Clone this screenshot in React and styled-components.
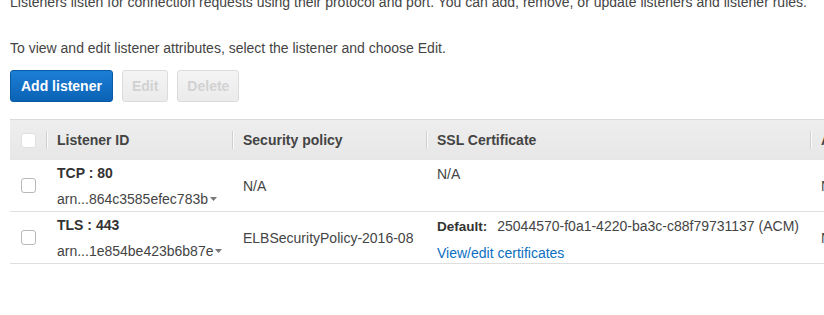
import React from 'react';
import styled, { createGlobalStyle } from 'styled-components';

const GlobalStyle = createGlobalStyle`
  html, body {
    margin: 0;
    padding: 0;
    background: #fff;
    overflow: hidden;
  }
  body {
    font-family: "Liberation Sans", Arial, Helvetica, sans-serif;
    font-size: 14px;
    color: #444;
  }
`;

const Page = styled.div`
  padding: 0 0 0 10px;
  width: 1100px;
`;

const Intro = styled.p`
  margin: ${props => (props.first ? '-8px 0 0' : '26px 0 0')};
  line-height: 20px;
  white-space: nowrap;
`;

const Toolbar = styled.div`
  display: flex;
  gap: 9px;
  margin-top: 12px;
`;

const Button = styled.button`
  height: 32px;
  padding: 0 ${props => (props.primary ? '10px' : '9px')};
  border-radius: 3px;
  font-family: inherit;
  font-size: 14px;
  font-weight: bold;
  cursor: ${props => (props.disabled ? 'default' : 'pointer')};
  color: ${props => (props.primary ? '#fff' : '#d2d2d2')};
  border: 1px solid ${props => (props.primary ? '#0a5aa3' : '#dcdcdc')};
  background: ${props =>
    props.primary
      ? 'linear-gradient(#1c7fd6, #0a62b4)'
      : 'linear-gradient(#f4f4f4, #ebebeb)'};
`;

const Table = styled.div`
  margin-top: 17px;
  display: grid;
  grid-template-columns: 36px 186px 194px 384px 280px;
`;

const HeadCell = styled.div`
  height: 40px;
  border-top: 1px solid #dadada;
  background: linear-gradient(#eeeeee, #e7e7e7);
  display: flex;
  align-items: center;
  position: relative;
  padding-left: 11px;
  font-weight: bold;
  color: #444;
  ${props =>
    props.divider &&
    `
    &::before {
      content: '';
      position: absolute;
      left: 0;
      top: 11px;
      bottom: 11px;
      width: 1px;
      background: #d0d0d0;
      box-shadow: 1px 0 0 #fafafa;
    }
  `}
`;

const Cell = styled.div`
  height: 52px;
  box-sizing: border-box;
  border-bottom: 1px solid #dfdfdf;
  padding: ${props => (props.top ? '1px 0 0 11px' : '0 0 0 11px')};
  display: flex;
  flex-direction: column;
  justify-content: ${props => (props.top ? 'flex-start' : 'center')};
  line-height: 26px;
  white-space: nowrap;
`;

const Check = styled.span`
  display: block;
  width: 13px;
  height: 13px;
  border-radius: 3px;
  background: #fff;
  border: 1px solid ${props => (props.head ? '#e0e0e0' : '#b8b8b8')};
`;

const Protocol = styled.span`
  font-weight: bold;
  color: #333;
`;

const Arn = styled.span`
  display: inline-flex;
  align-items: center;
  gap: 2px;
`;

const Label = styled.span`
  font-weight: bold;
  font-size: 13.5px;
  color: #333;
  margin-right: 10px;
`;

const Link = styled.a`
  color: #0b6fc0;
  text-decoration: none;
`;

const Caret = () => (
  <svg width="7" height="4" viewBox="0 0 7 4">
    <path d="M0 0 L7 0 L3.5 4 Z" fill="#777" />
  </svg>
);

const listeners = [
  { id: 'TCP : 80', arn: 'arn...864c3585efec783b', policy: 'N/A', cert: null },
  {
    id: 'TLS : 443',
    arn: 'arn...1e854be423b6b87e',
    policy: 'ELBSecurityPolicy-2016-08',
    cert: '25044570-f0a1-4220-ba3c-c88f79731137 (ACM)',
  },
];

export default function App() {
  return (
    <Page>
      <GlobalStyle />
      <Intro first>
        Listeners listen for connection requests using their protocol and port. You can add, remove, or update listeners and listener rules.
      </Intro>
      <Intro>To view and edit listener attributes, select the listener and choose Edit.</Intro>
      <Toolbar>
        <Button primary>Add listener</Button>
        <Button disabled>Edit</Button>
        <Button disabled>Delete</Button>
      </Toolbar>
      <Table>
        <HeadCell>
          <Check head />
        </HeadCell>
        <HeadCell divider>Listener ID</HeadCell>
        <HeadCell divider>Security policy</HeadCell>
        <HeadCell divider>SSL Certificate</HeadCell>
        <HeadCell divider>ALPN policy</HeadCell>
        {listeners.map(l => (
          <React.Fragment key={l.id}>
            <Cell>
              <Check />
            </Cell>
            <Cell>
              <Protocol>{l.id}</Protocol>
              <Arn>
                {l.arn}
                <Caret />
              </Arn>
            </Cell>
            <Cell>{l.policy}</Cell>
            <Cell top>
              {l.cert ? (
                <>
                  <span>
                    <Label>Default:</Label>
                    {l.cert}
                  </span>
                  <Link href="#">View/edit certificates</Link>
                </>
              ) : (
                <span>N/A</span>
              )}
            </Cell>
            <Cell>N/A</Cell>
          </React.Fragment>
        ))}
      </Table>
    </Page>
  );
}
